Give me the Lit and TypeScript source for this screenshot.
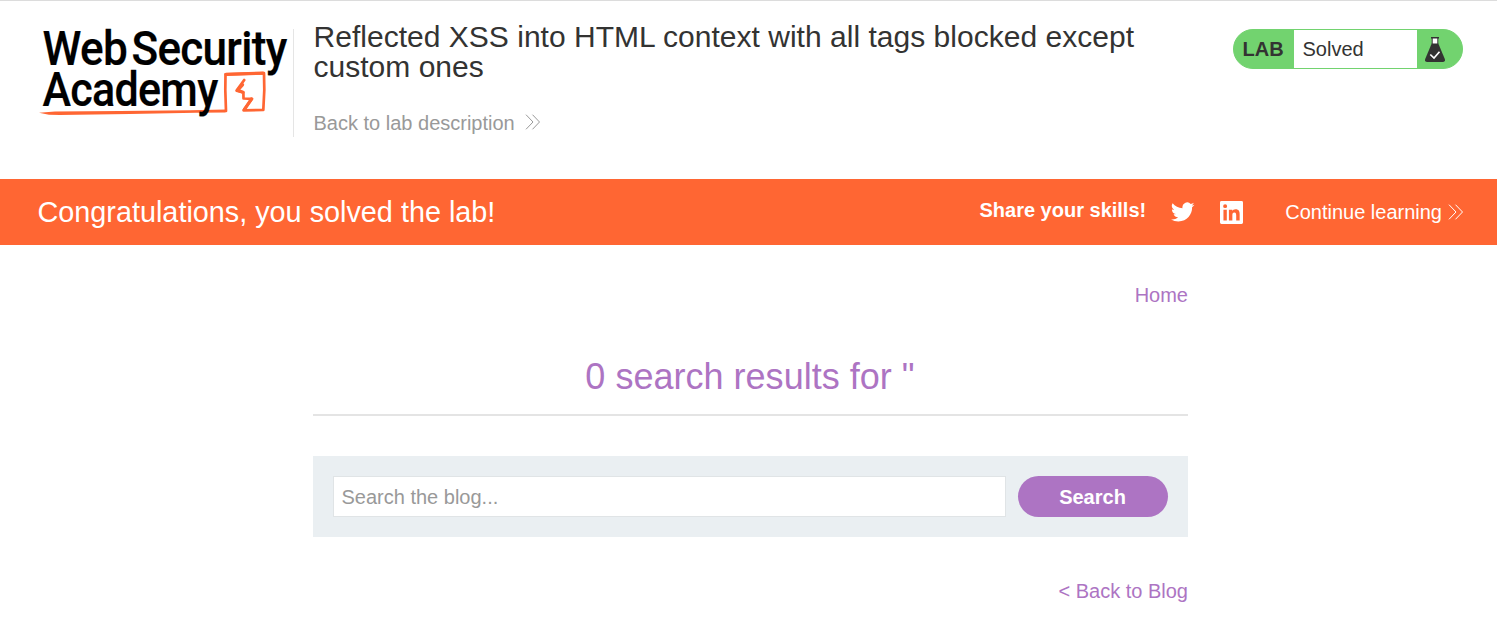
import { LitElement, html, css, svg } from "lit";
import { customElement } from "lit/decorators.js";

const chevrons = html`<svg class="chevrons" viewBox="0 0 16 16" width="16" height="16" fill="none" stroke="currentColor" stroke-width="1">
  ${svg`<path d="M1 .7 8 8 1 15.3M7.5 .7 14.5 8 7.5 15.3" />`}
</svg>`;

@customElement("academy-logo")
export class AcademyLogo extends LitElement {
  static styles = css`
    :host { display: block; width: 255px; height: 108px; }
    .logo { display: block; overflow: visible; }
    .word { font: 500 47.5px Roboto, "Liberation Sans", sans-serif; letter-spacing: -0.8px; fill: #000; stroke: #000; stroke-width: 0.2; }
    .ink { fill: none; stroke: #ff6633; stroke-linejoin: round; stroke-linecap: round; }
  `;
  render() {
    return html`<svg class="logo" width="255" height="108" viewBox="38 29 255 108">
      <path d="M39 112.700 55 111.500 120 110.900 190 110.200 225.500 109.600V112.500L196 112.800 130 114 60 114.900 49 114.700Z" fill="#ff6633" />
      <path class="ink" stroke-width="2.700" d="M226 111 225.300 90 225.500 74.300 264 73.200 264.300 90 263.300 110 243.500 110.300 252 98.800 243.500 98.500 243.400 92.500 236.600 90.600 244.200 80" />
      <path class="ink" stroke-width="3.200" d="M226 74.300 263 73.200M244.500 109.300 251.500 99M243 92.300 237.500 90.300 242.500 84.800" />
      <text class="word" x="42.500" y="64.800" textLength="84.500" lengthAdjust="spacingAndGlyphs">Web</text>
      <text class="word" x="131.500" y="64.800" textLength="155" lengthAdjust="spacingAndGlyphs">Security</text>
      <text class="word" x="42.500" y="105.800" textLength="175" lengthAdjust="spacingAndGlyphs">Academy</text>
    </svg>`;
  }
}

@customElement("lab-status")
export class LabStatus extends LitElement {
  static styles = css`
    :host { display: block; }
    .pill { box-sizing: border-box; display: flex; width: 230px; height: 40px; border: 1px solid #72d36f; border-radius: 20px; background: #72d36f; overflow: hidden; color: #333332; line-height: 38px; }
    .tag { width: 60px; padding-left: 8.5px; box-sizing: border-box; font-weight: bold; }
    .state { width: 123px; padding-left: 8.5px; box-sizing: border-box; background: #fff; }
    .flask { display: block; margin: 7px 0 0 8px; }
  `;
  render() {
    return html`<div class="pill">
      <span class="tag">LAB</span><span class="state">Solved</span>
      <svg class="flask" width="20" height="25" viewBox="0 0 20 25">
        <path d="M7 1H13V8H7Z" fill="#fff" />
        <path d="M6 0H14V1.500H13.300V7H12.300V1.500H7.700V7H6.700V1.500H6Z" fill="#333332" />
        <path d="M6.700 6.500H13.300L19.800 22Q20.500 25 18 25H2Q-.5 25 .2 22Z" fill="#333332" />
        <path d="M5.300 17.500 9 21 14.500 14.800" fill="none" stroke="#fff" stroke-width="1.700" />
      </svg>
    </div>`;
  }
}

@customElement("app-root")
export class AppRoot extends LitElement {
  static styles = css`
    :host { display: block; min-height: 622px; box-sizing: border-box; background: #fff; border-top: 1px solid #dcdcdc; font: 20px/23px "Liberation Sans", Arial, sans-serif; color: #333332; }
    .header { display: flex; height: 178px; padding: 28px 34px 0 38px; box-sizing: border-box; }
    .brand { width: 255px; height: 108px; border-right: 1px solid #e5e5e5; }
    .intro { flex: 1; padding-left: 19.5px; }
    .title { margin: -7px 0 0; width: 840px; font-weight: normal; font-size: 30px; line-height: 30px; letter-spacing: 0.02px; }
    .back { display: flex; align-items: center; margin-top: 30px; color: #999; text-decoration: none; }
    .back .chevrons { margin: -3px 0 0 10px; }
    .banner { display: flex; align-items: center; height: 66px; padding: 0 33px 0 37.5px; background: #ff6633; color: #fff; }
    .congrats { flex: 1; font-size: 28.8px; }
    .share { font-weight: bold; margin: 0 25px 4px 0; }
    .twitter { width: 23.5px; height: 24px; margin-right: 25px; }
    .linkedin { width: 23px; height: 23px; margin-right: 42.5px; }
    .continue { display: flex; align-items: center; color: #fff; text-decoration: none; }
    .continue .chevrons { margin-left: 6px; }
    .page { width: 875px; margin-left: 313px; }
    .nav { display: flex; justify-content: flex-end; padding-top: 39px; }
    .link { color: #ad74c3; text-decoration: none; }
    .results { margin: 50px 0 0; padding-bottom: 17px; border-bottom: 2px solid #e4e4e4; text-align: center; color: #ad74c3; font-size: 36px; letter-spacing: 0.02px; text-indent: -1px; line-height: 40px; font-weight: normal; }
    .search { display: flex; gap: 12px; margin-top: 40px; height: 81px; padding: 20px; box-sizing: border-box; background: #eaeff2; }
    .field { flex: 1; min-width: 0; box-sizing: border-box; height: 41px; border: 1px solid #e0e4e6; border-radius: 0; padding: 1px 7.5px 0; font: inherit; outline: none; background: #fff; }
    .field::placeholder { color: #999; opacity: 1; }
    .button { width: 150px; height: 41px; border: 0; border-radius: 21px; background: #ad74c3; color: #fff; font: bold 20px "Liberation Sans", Arial, sans-serif; padding: 1px 1px 0 0; }
    .footer { display: flex; justify-content: flex-end; margin-top: 43px; }
  `;
  render() {
    return html`
      <header class="header">
        <div class="brand"><academy-logo></academy-logo></div>
        <div class="intro">
          <h2 class="title">Reflected XSS into HTML context with all tags blocked except custom ones</h2>
          <a class="back">Back to lab description${chevrons}</a>
        </div>
        <lab-status></lab-status>
      </header>
      <section class="banner">
        <span class="congrats">Congratulations, you solved the lab!</span>
        <span class="share">Share your skills!</span>
        <svg class="twitter" viewBox="0 0 24 24" fill="#fff"><path d="M23.950 4.570a10 10 0 0 1-2.820.77 4.960 4.960 0 0 0 2.160-2.720c-.95.550-2 .960-3.130 1.180a4.920 4.920 0 0 0-8.380 4.480C7.690 8.090 4.070 6.130 1.640 3.160a4.920 4.920 0 0 0 1.520 6.570 4.900 4.900 0 0 1-2.230-.61v.06a4.920 4.920 0 0 0 3.950 4.830 5 5 0 0 1-2.210.08 4.940 4.940 0 0 0 4.600 3.420A9.870 9.870 0 0 1 0 19.540a13.990 13.990 0 0 0 7.550 2.210c9.050 0 14-7.500 14-13.980 0-.21 0-.42-.02-.63a9.940 9.940 0 0 0 2.460-2.550z" /></svg>
        <svg class="linkedin" viewBox="0 0 24 24" fill="#fff"><path fill-rule="evenodd" d="M1.500 0h21A1.500 1.500 0 0 1 24 1.500v21a1.500 1.500 0 0 1-1.500 1.500h-21A1.500 1.500 0 0 1 0 22.500v-21A1.500 1.500 0 0 1 1.500 0zM3.600 9v11.400h3.500V9zM5.350 3.300a2.060 2.060 0 1 0 0 4.120 2.060 2.060 0 0 0 0-4.120zM9.300 9v11.400h3.600v-5.600c0-1.500.3-2.900 2.100-2.900s1.900 1.700 1.900 3v5.500h3.600v-6.300c0-3.100-.7-5.400-4.300-5.400-1.700 0-2.900.9-3.400 1.800V9z" /></svg>
        <a class="continue">Continue learning${chevrons}</a>
      </section>
      <main class="page">
        <nav class="nav"><a class="link">Home</a></nav>
        <h1 class="results">0 search results for "</h1>
        <form class="search" @submit=${(e: Event) => e.preventDefault()}>
          <input class="field" type="text" placeholder="Search the blog..." />
          <button class="button" type="submit">Search</button>
        </form>
        <div class="footer"><a class="link">&lt; Back to Blog</a></div>
      </main>
    `;
  }
}
